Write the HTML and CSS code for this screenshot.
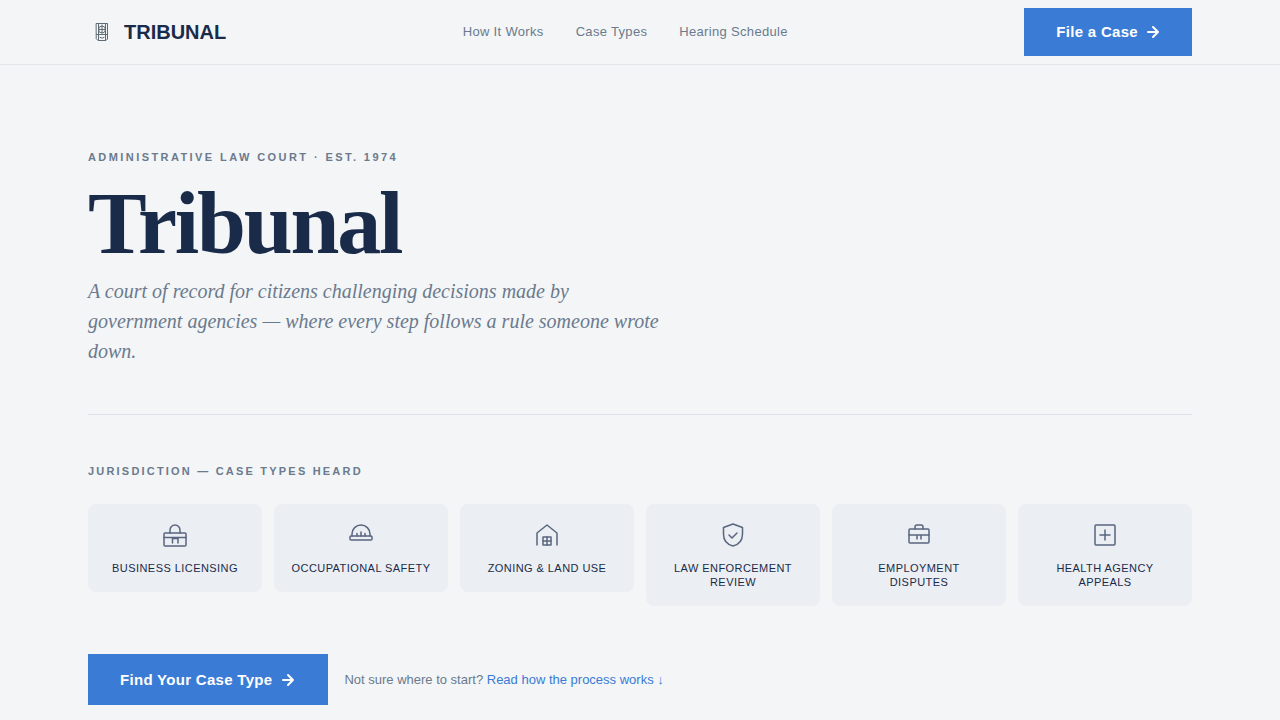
FILE: index.html
```html
<!DOCTYPE html>
<html lang="en">

<head>
    <meta charset="UTF-8">
    <meta name="viewport" content="width=device-width, initial-scale=1.0">
    <title>Tribunal</title>
    <link rel="stylesheet" href="styles.css">
</head>

<body>
    <header class="site-header">
        <div class="container header-inner">
            <a href="#" class="brand">
                <svg class="brand-mark" viewBox="0 0 28 28" aria-hidden="true">
                    <path d="M8.500 5.500H19.500V21L18 22.500H10L8.500 21Z" />
                    <path d="M10.500 5.500V22M17.500 5.500V22M8.500 16.500H19.500M10.500 11.500H17.500M14 7V15M12 19.500Q14 21 16 19.500" />
                    <circle cx="14" cy="11.500" r="3.500" />
                </svg>
                <span>TRIBUNAL</span>
            </a>
            <nav class="main-nav">
                <a href="#process">How It Works</a>
                <a href="#cases">Case Types</a>
                <a href="#schedule">Hearing Schedule</a>
            </nav>
            <button type="button" class="btn">
                File a Case
                <svg class="arrow" viewBox="1 1 14 14" aria-hidden="true">
                    <path d="M3 8H13M8 3L13 8L8 13" />
                </svg>
            </button>
        </div>
    </header>

    <main class="container">
        <!-- Hero -->
        <section class="hero">
            <p class="label eyebrow">ADMINISTRATIVE LAW COURT · EST. 1974</p>
            <h1>Tribunal</h1>
            <p class="tagline">A court of record for citizens challenging decisions made by government agencies — where every step follows a rule someone wrote down.</p>
        </section>

        <!-- Case types -->
        <section id="cases" class="cases">
            <h2 class="label">JURISDICTION — CASE TYPES HEARD</h2>
            <div class="case-grid">
                <a href="#licensing" class="case-card">
                    <svg viewBox="0 0 28 28" aria-hidden="true">
                        <rect x="3" y="12" width="22" height="13" rx="1" />
                        <path d="M9 12V9A5 5 0 0 1 19 9V12M3 16.500H25M11.500 22V17.500H17V22" />
                    </svg>
                    <span>BUSINESS LICENSING</span>
                </a>
                <a href="#safety" class="case-card">
                    <svg viewBox="0 0 28 28" aria-hidden="true">
                        <rect x="3" y="15" width="22" height="4" rx="1" />
                        <path d="M5 15V13A9 9 0 0 1 23 13V15M10 15V12.500M14 15V11M18 15V12.500" />
                    </svg>
                    <span>OCCUPATIONAL SAFETY</span>
                </a>
                <a href="#zoning" class="case-card">
                    <svg viewBox="0 0 28 28" aria-hidden="true">
                        <path d="M4 24V12L14 4L24 12V24" />
                        <rect x="10" y="16" width="8" height="8" />
                        <path d="M14 16V24M10 20H18" />
                    </svg>
                    <span>ZONING &amp; LAND USE</span>
                </a>
                <a href="#enforcement" class="case-card">
                    <svg viewBox="0 0 28 28" aria-hidden="true">
                        <path d="M14 3L23.500 6.500V13C23.500 19 20 23.500 14 25C8 23.500 4.500 19 4.500 13V6.500Z" />
                        <path d="M10 14L13 17L18 12" />
                    </svg>
                    <span>LAW ENFORCEMENT REVIEW</span>
                </a>
                <a href="#employment" class="case-card">
                    <svg viewBox="0 0 28 28" aria-hidden="true">
                        <rect x="4" y="8" width="20" height="14" rx="1" />
                        <path d="M10 8V6Q10 4 12 4H16Q18 4 18 6V8M4 14H24M12 18V14M16 18V14" />
                    </svg>
                    <span>EMPLOYMENT DISPUTES</span>
                </a>
                <a href="#health" class="case-card">
                    <svg viewBox="0 0 28 28" aria-hidden="true">
                        <rect x="4" y="4" width="20" height="20" rx="1" />
                        <path d="M14 9V19M9 14H19" />
                    </svg>
                    <span>HEALTH AGENCY APPEALS</span>
                </a>
            </div>
        </section>

        <div class="actions">
            <button type="button" class="btn btn-large">
                Find Your Case Type
                <svg class="arrow" viewBox="0 0 16 16" aria-hidden="true">
                    <path d="M3 8H13M8 3L13 8L8 13" />
                </svg>
            </button>
            <p class="hint">Not sure where to start? <a href="#process">Read how the process works ↓</a></p>
        </div>
    </main>
</body>

</html>
```
FILE: styles.css
```css
* {
    box-sizing: border-box;
}

body {
    margin: 0;
    background-color: #f3f5f7;
    color: #1a2b4a;
    font-family: "Liberation Sans", Arial, sans-serif;
}

a {
    text-decoration: none;
}

h1, h2, p {
    margin: 0;
}

svg {
    fill: none;
    stroke: currentColor;
    stroke-linecap: round;
    stroke-linejoin: round;
}

.container {
    max-width: 1200px;
    margin: 0 auto;
    padding: 0 48px;
}

/* header */
.site-header {
    border-bottom: 1px solid #e2e6eb;
}

.header-inner {
    display: flex;
    align-items: center;
    justify-content: space-between;
    min-height: 64px;
}

.brand {
    display: flex;
    align-items: center;
    gap: 8px;
    color: #1a2b4a;
    font-size: 20px;
    font-weight: bold;
}

.brand-mark {
    width: 28px;
    height: 28px;
    color: #5f6b75;
}

.main-nav {
    display: flex;
    gap: 32px;
}

.main-nav a {
    color: #6b7a8d;
    font-size: 13px;
    line-height: 16px;
    letter-spacing: 0.025em;
}

.btn {
    display: flex;
    align-items: center;
    gap: 8px;
    min-height: 48px;
    padding: 0 32px;
    border: none;
    background-color: #3a7bd5;
    color: white;
    font-family: inherit;
    font-size: 15px;
    font-weight: bold;
    line-height: 16px;
    letter-spacing: 0.02em;
    cursor: pointer;
}

.arrow {
    width: 14px;
    height: 14px;
    stroke-width: 2;
}

.btn-large {
    min-height: 51px;
}

.btn-large .arrow {
    width: 16px;
    height: 16px;
}

/* hero */
.hero {
    padding: 85px 0 48px;
    border-bottom: 1px solid #dce1e7;
}

.label {
    color: #6b7a8d;
    font-size: 11px;
    font-weight: bold;
    line-height: 14px;
    letter-spacing: 0.2em;
}

.eyebrow {
    letter-spacing: 0.22em;
}

h1 {
    margin: 20px 0 12px;
    font-family: "Liberation Serif", "Times New Roman", serif;
    font-size: 88px;
    line-height: 80px;
    letter-spacing: -0.025em;
}

.tagline {
    max-width: 580px;
    color: #6b7a8d;
    font-family: "Liberation Serif", "Times New Roman", serif;
    font-size: 20px;
    font-style: italic;
    line-height: 30px;
}

/* case types */
.cases {
    padding: 49px 0 48px;
}

.case-grid {
    display: grid;
    grid-template-columns: repeat(6, 1fr);
    align-items: start;
    gap: 12px;
    margin-top: 26px;
}

.case-card {
    display: flex;
    flex-direction: column;
    align-items: center;
    gap: 12px;
    padding: 16px;
    border: 1px solid transparent;
    border-radius: 8px;
    background-color: #ebeef2;
    color: #1a2b4a;
    font-size: 11px;
    line-height: 14px;
    letter-spacing: 0.04em;
    text-align: center;
}

.case-card svg {
    width: 28px;
    height: 28px;
    color: #5a6580;
    stroke-width: 1.5;
}

/* actions */
.actions {
    display: flex;
    align-items: center;
    gap: 16px;
}

.hint {
    color: #6b7a8d;
    font-size: 13px;
}

.hint a {
    color: #3a7bd5;
}
```
